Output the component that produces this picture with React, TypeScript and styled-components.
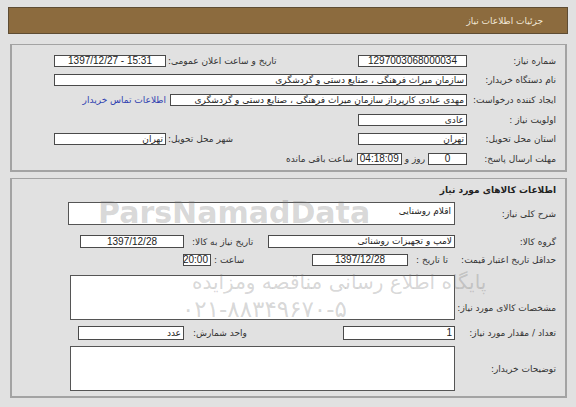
import React from 'react';
import styled, { createGlobalStyle } from 'styled-components';

const GlobalStyle = createGlobalStyle`
  html, body {
    margin: 0;
    padding: 0;
    background: #e1e1e1;
  }
  body {
    font-family: "DejaVu Sans", "Liberation Sans", sans-serif;
    font-size: 9px;
    color: #222;
  }
`;

// Page frame
const Page = styled.div`
  position: relative;
  direction: rtl;
  width: 576px;
  height: 407px;
  padding: 7px 8px 0 8px;
  box-sizing: border-box;
  overflow: hidden;
`;

const Header = styled.div`
  height: 27px;
  box-sizing: border-box;
  background: #8c6b3e;
  border: 1px solid #5e4c33;
  color: #f1e8d6;
  display: flex;
  align-items: center;
  padding-right: 24px;
  font-size: 9px;
`;

const Panel = styled.div<{ $top: number; $height: number }>`
  margin: ${p => p.$top}px 1px 0 2px;
  height: ${p => p.$height}px;
  box-sizing: border-box;
  border: 2px solid #a3a3a3;
  border-width: 1px 2px 2px 2px;
  padding: 0 9px 0 0;
  display: flex;
  flex-direction: column;
`;

const Row = styled.div<{ $h: number; $mt?: number }>`
  display: flex;
  align-items: center;
  height: ${p => p.$h}px;
  margin-top: ${p => p.$mt || 0}px;
  white-space: nowrap;
`;

const Label = styled.div<{ $w: number }>`
  width: ${p => p.$w}px;
  flex: none;
  color: #333;
`;

const SubLabel = styled.div<{ $w: number; $pl?: number; $mr?: number }>`
  width: ${p => p.$w}px;
  flex: none;
  text-align: left;
  padding-left: ${p => p.$pl || 2}px;
  margin-right: ${p => p.$mr || 0}px;
  box-sizing: border-box;
  color: #333;
`;

const Text = styled.span<{ $mr?: number }>`
  margin-right: ${p => p.$mr || 0}px;
  color: #333;
`;

const Field = styled.div<{ $w: number; $h?: number; $align?: string; $mr?: number }>`
  width: ${p => p.$w}px;
  height: ${p => p.$h || 12}px;
  margin-right: ${p => p.$mr || 0}px;
  flex: none;
  box-sizing: border-box;
  background: #fff;
  border: 1px solid #4a4a4a;
  overflow: hidden;
  text-align: ${p => p.$align || 'right'};
  padding: 0 2px;
  line-height: ${p => (p.$h || 12) - 2}px;
  color: #222;
`;

// latin numbers keep left-to-right order inside rtl fields
const Num = styled.span`
  display: inline-block;
  direction: ltr;
  unicode-bidi: isolate;
  font-family: "Liberation Sans", Arial, sans-serif;
  font-size: 10px;
`;

const Area = styled.div<{ $w: number; $h: number }>`
  width: ${p => p.$w}px;
  height: ${p => p.$h}px;
  flex: none;
  box-sizing: border-box;
  background: #fff;
  border: 1px solid #555;
  padding: 3px 3px;
  color: #222;
  align-self: flex-start;
`;

const AreaRow = styled.div<{ $h: number; $mt?: number }>`
  display: flex;
  align-items: center;
  height: ${p => p.$h}px;
  margin-top: ${p => p.$mt || 0}px;
`;

const Link = styled.a`
  margin-right: 4px;
  color: #2f3fb0;
  text-decoration: none;
`;

const Title = styled.div`
  font-weight: bold;
  color: #222;
  height: 16px;
  margin-top: 3px;
  display: flex;
  align-items: center;
`;

// faint watermark lying over the form
const Watermark = styled.div`
  position: absolute;
  left: 0;
  top: 0;
  width: 576px;
  height: 407px;
  pointer-events: none;
  direction: ltr;
`;

const WmText = styled.div<{ $x: number; $y: number; $size: number; $bold?: boolean }>`
  position: absolute;
  left: ${p => p.$x}px;
  top: ${p => p.$y}px;
  font-size: ${p => p.$size}px;
  line-height: 1;
  font-weight: ${p => (p.$bold ? 'bold' : 'normal')};
  font-family: "DejaVu Sans", "Liberation Sans", sans-serif;
  color: rgba(120, 120, 120, 0.3);
  white-space: nowrap;
`;

const App: React.FC = () => {
  return (
    <>
      <GlobalStyle />
      <Page>
        <Header>جزئیات اطلاعات نیاز</Header>

        <Panel $top={10} $height={128}>
          <div style={{ height: 6 }} />
          <Row $h={19.6}>
            <Label $w={89}>شماره نیاز:</Label>
            <Field $w={109} $align="center"><Num>1297003068000034</Num></Field>
            <SubLabel $w={114} $mr={78}>تاریخ و ساعت اعلان عمومی:</SubLabel>
            <Field $w={112} $align="center"><Num>1397/12/27 - 15:31</Num></Field>
          </Row>
          <Row $h={19.6}>
            <Label $w={89}>نام دستگاه خریدار:</Label>
            <Field $w={413}>سازمان میراث فرهنگی ، صنایع دستی و گردشگری</Field>
          </Row>
          <Row $h={19.6}>
            <Label $w={89}>ایجاد کننده درخواست:</Label>
            <Field $w={297}>مهدی عبادی کارپرداز سازمان میراث فرهنگی ، صنایع دستی و گردشگری</Field>
            <Link href="#">اطلاعات تماس خریدار</Link>
          </Row>
          <Row $h={19.6}>
            <Label $w={89}>اولویت نیاز :</Label>
            <Field $w={109}>عادی</Field>
          </Row>
          <Row $h={19.6}>
            <Label $w={89}>استان محل تحویل:</Label>
            <Field $w={109}>تهران</Field>
            <SubLabel $w={114} $mr={78}>شهر محل تحویل:</SubLabel>
            <Field $w={112}>تهران</Field>
          </Row>
          <Row $h={19.6}>
            <Label $w={89}>مهلت ارسال پاسخ:</Label>
            <Field $w={39} $align="center"><Num>0</Num></Field>
            <Text $mr={3}>روز و</Text>
            <Field $w={45} $mr={3} $align="center"><Num>04:18:09</Num></Field>
            <Text $mr={4}>ساعت باقی مانده</Text>
          </Row>
        </Panel>

        <Panel $top={6} $height={220}>
          <Title>اطلاعات کالاهای مورد نیاز</Title>
          <AreaRow $h={23} $mt={4}>
            <Label $w={101}>شرح کلی نیاز:</Label>
            <Area $w={387} $h={23}>اقلام روشنایی</Area>
          </AreaRow>
          <Row $h={13} $mt={10}>
            <Label $w={101}>گروه کالا:</Label>
            <Field $w={187} $h={13}>لامپ و تجهیزات روشنائی</Field>
            <SubLabel $w={84} $pl={8}>تاریخ نیاز به کالا:</SubLabel>
            <Field $w={104} $h={13} $align="center"><Num>1397/12/28</Num></Field>
          </Row>
          <Row $h={12} $mt={6}>
            <Label $w={108}>حداقل تاریخ اعتبار قیمت:</Label>
            <Label $w={40}>تا تاریخ :</Label>
            <Field $w={96} $h={12} $align="center"><Num>1397/12/28</Num></Field>
            <SubLabel $w={101} $pl={3}>ساعت :</SubLabel>
            <Field $w={28} $h={12} $align="center"><Num>20:00</Num></Field>
          </Row>
          <AreaRow $h={45} $mt={9}>
            <Label $w={101} style={{ marginTop: 20 }}>مشخصات کالای مورد نیاز:</Label>
            <Area $w={385} $h={45} />
          </AreaRow>
          <Row $h={14} $mt={6}>
            <Label $w={101}>تعداد / مقدار مورد نیاز:</Label>
            <Field $w={112} $h={14}><Num>1</Num></Field>
            <SubLabel $w={159} $pl={9}>واحد شمارش:</SubLabel>
            <Field $w={106} $h={14}>عدد</Field>
          </Row>
          <AreaRow $h={45} $mt={6}>
            <Label $w={101}>توضیحات خریدار:</Label>
            <Area $w={385} $h={45} />
          </AreaRow>
        </Panel>

        <Watermark>
          <WmText $x={98} $y={198} $size={30} $bold>ParsNamadData</WmText>
          <WmText $x={192} $y={272} $size={20}>پایگاه اطلاع رسانی مناقصه ومزایده</WmText>
          <WmText $x={182} $y={298} $size={23}>۰۲۱-۸۸۳۴۹۶۷۰-۵</WmText>
        </Watermark>
      </Page>
    </>
  );
};

export default App;
